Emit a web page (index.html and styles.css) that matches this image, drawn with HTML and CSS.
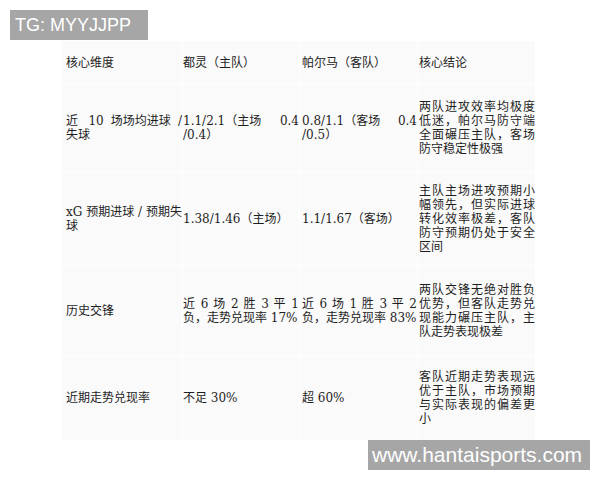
FILE: index.html
```html
<!DOCTYPE html>
<html lang="zh">
<head>
<meta charset="utf-8">
<link rel="stylesheet" href="styles.css">
</head>
<body>
<div class="badge">TG: MYYJJPP</div>
<div class="wrap">
<table class="stats">
<colgroup><col class="c1"><col class="c2"><col class="c3"><col class="c4"></colgroup>
<tr class="head"><th>核心维度</th><th>都灵（主队）</th><th>帕尔马（客队）</th><th>核心结论</th></tr>
<tr class="r1"><td>近 10 <span class="run">场场均进球</span> / <span class="run">失球</span></td><td>1.1/2.1<span class="run">（主场</span> 0.4<wbr>/0.4）</td><td>0.8/1.1<span class="run">（客场</span> 0.4<wbr>/0.5）</td><td>两队进攻效率均极度低迷，帕尔马防守端全面碾压主队，客场防守稳定性极强</td></tr>
<tr class="r2"><td>xG <span class="run">预期进球</span> / <span class="run">预期失</span><wbr>球</td><td>1.38/1.46（主场）</td><td>1.1/1.67（客场）</td><td>主队主场进攻预期小幅领先，但实际进球转化效率极差，客队防守预期仍处于安全区间</td></tr>
<tr class="r3"><td>历史交锋</td><td>近 6 场 2 胜 3 平 1 负，走势兑现率 17%</td><td>近 6 场 1 胜 3 平 2 负，走势兑现率 83%</td><td>两队交锋无绝对胜负优势，但客队走势兑现能力碾压主队，主队走势表现极差</td></tr>
<tr class="r4"><td>近期走势兑现率</td><td>不足 30%</td><td>超 60%</td><td>客队近期走势表现远优于主队，市场预期与实际表现的偏差更小</td></tr>
</table>
</div>
<div class="mark">www.hantaisports.com</div>
</body>
</html>
```
FILE: styles.css
```css
html, body {
  margin: 0;
  padding: 0;
  background: #ffffff;
}
body {
  width: 600px;
  height: 480px;
  position: relative;
  overflow: hidden;
  font-family: "DejaVu Serif", "Noto Sans CJK SC", serif;
  color: #1e1e1e;
}
.badge {
  position: absolute;
  left: 10px;
  top: 10px;
  width: 138px;
  height: 30px;
  box-sizing: border-box;
  padding-left: 5px;
  background: #a6a6a6;
  color: #ffffff;
  font-family: "Liberation Sans", Arial, sans-serif;
  font-size: 18px;
  line-height: 30px;
}
.mark {
  position: absolute;
  left: 368px;
  top: 440px;
  width: 222px;
  height: 30px;
  box-sizing: border-box;
  padding-left: 4px;
  background: #a6a6a6;
  color: #ffffff;
  font-family: "Liberation Sans", Arial, sans-serif;
  font-size: 21px;
  line-height: 30px;
  white-space: nowrap;
}
.wrap {
  padding: 40px 0 0 61px;
}
.stats {
  border-collapse: separate;
  border-spacing: 1px;
  table-layout: fixed;
  width: 475px;
  font-size: 12px;
  line-height: 14px;
}
.c1 { width: 120px; }
.c2 { width: 116px; }
.c3 { width: 117px; }
.c4 { width: 117px; }
.stats th, .stats td {
  background: #fafafa;
  vertical-align: middle;
  text-align: justify;
  padding: 0 0 0 2px;
  font-weight: normal;
}
.stats th {
  font-family: "Noto Sans CJK SC", sans-serif;
  color: #222222;
  text-align: left;
}
.stats td:first-child, .stats th:first-child { padding-left: 4px; }
.stats td:nth-child(2), .stats th:nth-child(2) { padding-left: 0; }
.stats td:nth-child(4), .stats th:nth-child(4) { padding-left: 1px; }
.run { display: inline-block; }
.head { height: 42px; }
.r1 { height: 88px; }
.r2 { height: 92px; }
.r3 { height: 89px; }
.r4 { height: 84px; }
```
